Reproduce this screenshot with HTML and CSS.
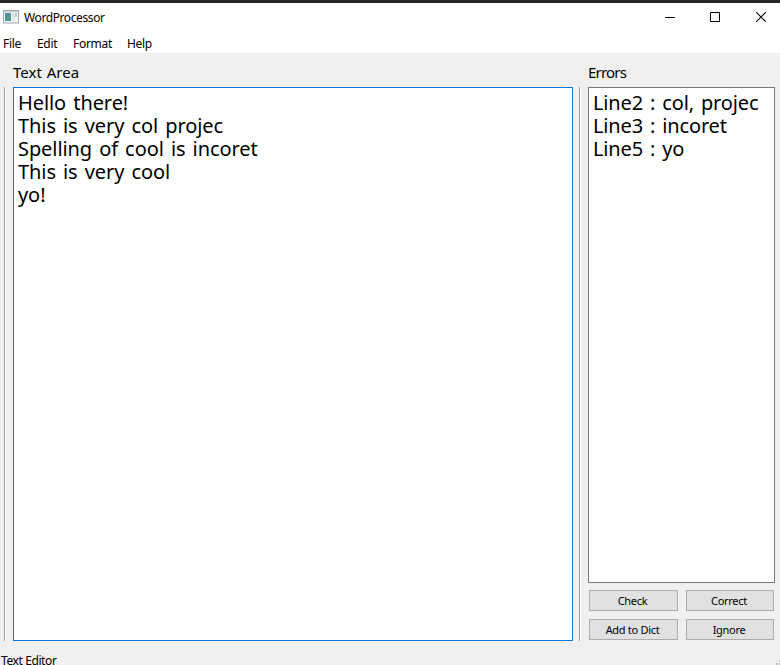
FILE: index.html
```html
<!DOCTYPE html>
<html lang="en">
<head>
<meta charset="utf-8">
<title>WordProcessor</title>
<link rel="stylesheet" href="styles.css">
</head>
<body>
<div class="window">
  <header class="titlebar">
    <svg class="app-icon" width="16" height="14" viewBox="0 0 16 14">
      <defs>
        <linearGradient id="pane" x1="0" y1="0" x2="1" y2="1"><stop offset="0" stop-color="#5485b5"/><stop offset="1" stop-color="#53a77b"/></linearGradient>
      </defs>
      <rect x=".5" y=".5" width="15" height="12.5" fill="#f4f5f6" stroke="#a1a8ad"/>
      <rect x="1" y="1" width="14" height="1.5" fill="#cbd3d9"/>
      <rect x="2" y="3" width="6" height="8" fill="url(#pane)"/>
      <rect x="9" y="3" width="3" height="8" fill="#e1e5e8"/>
      <rect x="12" y="3" width="2" height="4" fill="#b9d3d8"/>
    </svg>
    <span class="title">WordProcessor</span>
    <div class="controls">
      <svg width="11" height="11" viewBox="0 0 11 11"><path d="M1 5.5H11" stroke="#000"/></svg>
      <svg width="11" height="11" viewBox="0 0 11 11"><path d="M.5 .5H9.5V9.5H.5Z" fill="none" stroke="#000"/></svg>
      <svg width="11" height="11" viewBox="0 0 11 11"><path d="M.3 .3L9.7 9.7M9.7 .3L.3 9.7" stroke="#000" stroke-width="1.1"/></svg>
    </div>
  </header>
  <nav class="menubar">
    <span class="file">File</span><span class="edit">Edit</span><span class="format">Format</span><span class="help">Help</span>
  </nav>
  <main class="workspace">
    <div class="splitter"></div>
    <section class="editor">
      <h1 class="label">Text Area</h1>
      <div class="box editor-box">
        <p>Hello there!</p>
        <p>This is very col projec</p>
        <p>Spelling of cool is incoret</p>
        <p>This is very cool</p>
        <p>yo!</p>
      </div>
    </section>
    <div class="splitter"></div>
    <section class="errors">
      <h2 class="label errors-label">Errors</h2>
      <div class="box errors-box">
        <p>Line2 : col, projec</p>
        <p>Line3 : incoret</p>
        <p>Line5 : yo</p>
      </div>
      <div class="buttons">
        <button>Check</button><button>Correct</button>
        <button>Add to Dict</button><button>Ignore</button>
      </div>
    </section>
  </main>
  <footer class="statusbar"><span>Text Editor</span>
    <svg class="grip" width="4" height="5" viewBox="0 0 4 5"><path d="M3 0h1v2H3zM0 3h2v2H0zM3 3h1v2H3z" fill="#bfbfbf"/></svg>
  </footer>
</div>
</body>
</html>
```

FILE: styles.css
```css
* { box-sizing: border-box; }
body { margin: 0; color: #000; font: 12px "Noto Sans", sans-serif; }
.window { display: flex; flex-direction: column; width: 780px; height: 665px; overflow: hidden; background: #f0f0f0; border-top: 3px solid #262626; }
.titlebar { display: flex; height: 30px; flex: none; padding: 0 13px 0 3px; background: #fff; }
.app-icon { margin-top: 7px; }
.title { margin-left: 5px; line-height: 29px; letter-spacing: -.4px; }
.controls { display: flex; gap: 35px; margin: 9px 0 0 auto; }
.menubar { display: flex; height: 20px; flex: none; padding-left: 3px; background: #fff; line-height: 22px; letter-spacing: -.3px; }
.file { width: 34px; }
.edit { width: 36px; }
.format { width: 54px; }
.workspace { display: flex; height: 588px; flex: none; padding-left: 4px; }
.splitter { width: 2px; height: 554px; margin-top: 34px; background: #fff; border-left: 1px solid #a0a0a0; }
.editor { display: flex; flex-direction: column; width: 560px; margin: 0 6px 0 7px; }
.errors { display: flex; flex-direction: column; width: 187px; margin-left: 7px; }
.label { height: 34px; margin: 0; font-size: 15px; font-weight: 400; line-height: 39px; letter-spacing: 0; word-spacing: 1px; }
.errors-label { letter-spacing: -.8px; }
.box { padding: 3px 4px; background: #fff; border: 1px solid #7a7a7a; font-size: 20px; line-height: 23px; letter-spacing: -.08px; word-spacing: 2px; white-space: nowrap; }
.box p { margin: 0; }
.editor-box { height: 554px; border-color: #0078d7; }
.errors-box { height: 496px; }
.errors-box p { letter-spacing: -.15px; }
.buttons { display: grid; grid-template-columns: 89px 88px; gap: 8px; margin: 7px 1px 0; }
button { height: 21px; padding: 0 2px 0 0; border: 1px solid #adadad; background: #e1e1e1; color: #000; font: 11px/19px "Noto Sans", sans-serif; letter-spacing: -.3px; }
.statusbar { display: flex; justify-content: space-between; align-items: flex-end; flex: none; height: 24px; padding-left: 1px; line-height: 8px; letter-spacing: -.4px; }
```
